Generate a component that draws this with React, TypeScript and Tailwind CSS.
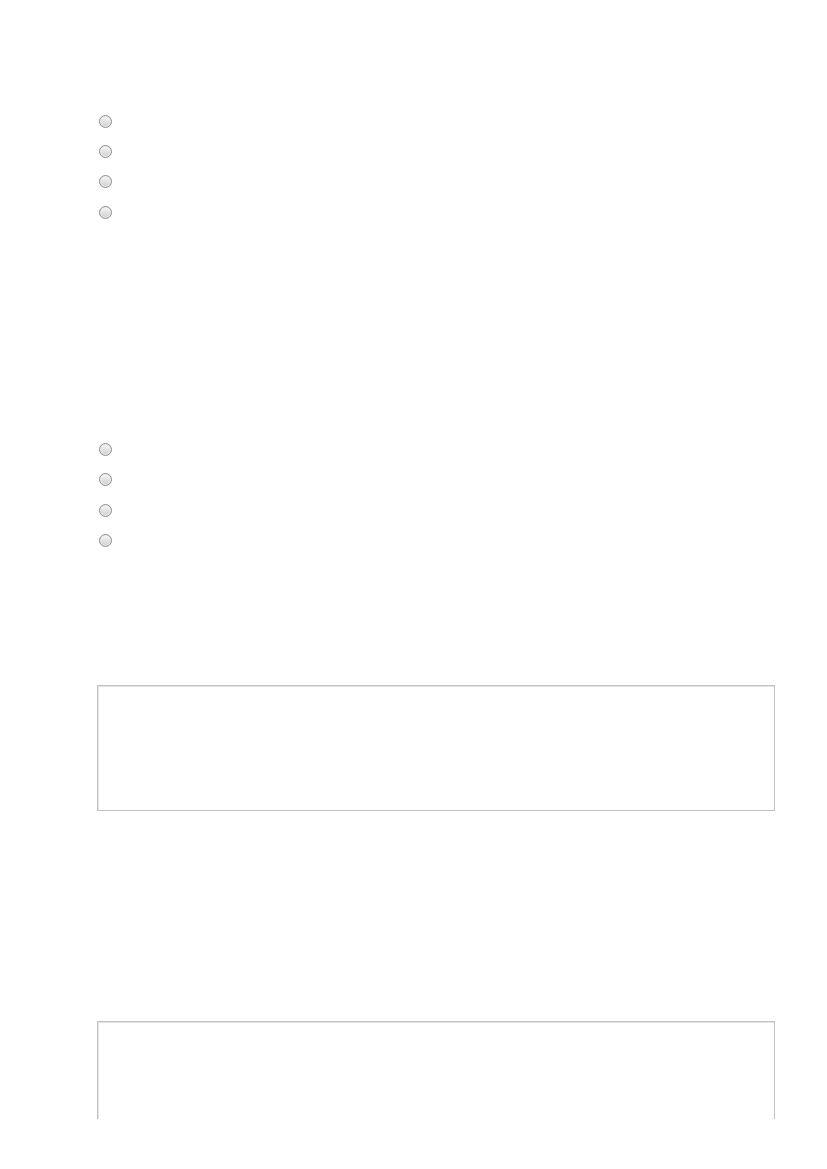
import React from 'react';

// Plain questionnaire page: two radio groups without labels, two empty answer boxes.
const Radio: React.FC = () => (
  <div className="flex items-center h-[30.33px]">
    <span className="ml-[2px] block w-[13px] h-[13px] rounded-full border border-[#8c8c8c] bg-gradient-to-b from-[#f7f7f7] to-[#cfcfcf] shadow-[inset_0_0_0_1px_#ececec]" />
  </div>
);

const RadioGroup: React.FC<{ count: number }> = ({ count }) => (
  <div className="flex flex-col">
    {Array.from({ length: count }).map((_, i) => (
      <Radio key={i} />
    ))}
  </div>
);

export default function App() {
  return (
    <div className="bg-white h-[1169px] font-['Liberation_Sans',Arial,sans-serif]">
      <div className="h-[1119px] overflow-hidden pl-[97px] pr-[52px] pt-[106px]">
        <RadioGroup count={4} />
        <div className="h-[207px]" />
        <RadioGroup count={4} />
        <div className="h-[129px]" />
        <div className="h-[126px] border border-[#c2c2c2] shadow-[inset_1px_1px_0_#e4e4e4]" />
        <div className="h-[210px]" />
        <div className="h-[126px] border border-[#c2c2c2] shadow-[inset_1px_1px_0_#e4e4e4]" />
      </div>
    </div>
  );
}
